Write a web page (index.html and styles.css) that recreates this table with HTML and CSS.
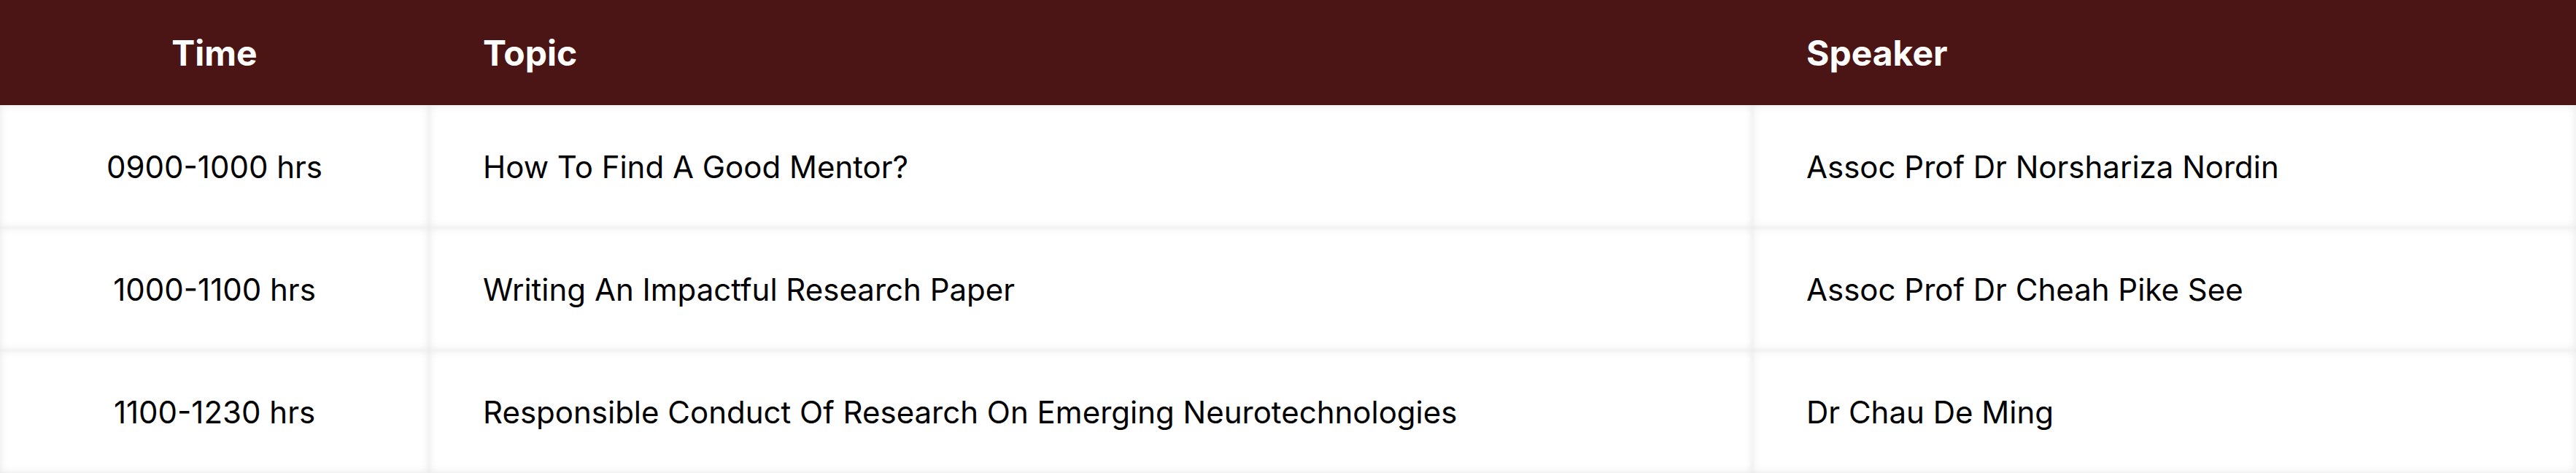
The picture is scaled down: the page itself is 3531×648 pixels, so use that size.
FILE: index.html
```html
<!DOCTYPE html>
<html>
<head>
<meta charset="utf-8">
<link rel="stylesheet" href="styles.css">
</head>
<body>
<div class="schedule">
  <div class="head center">Time</div>
  <div class="head">Topic</div>
  <div class="head">Speaker</div>

  <div class="cell center">0900-1000 hrs</div>
  <div class="cell">How To Find A Good Mentor?</div>
  <div class="cell">Assoc Prof Dr Norshariza Nordin</div>

  <div class="cell center">1000-1100 hrs</div>
  <div class="cell">Writing An Impactful Research Paper</div>
  <div class="cell">Assoc Prof Dr Cheah Pike See</div>

  <div class="cell center">1100-1230 hrs</div>
  <div class="cell">Responsible Conduct Of Research On Emerging Neurotechnologies</div>
  <div class="cell">Dr Chau De Ming</div>
</div>
</body>
</html>
```

FILE: styles.css
```css
html, body {
  margin: 0;
  padding: 0;
  background: #ffffff;
}
body {
  font-family: Inter, "Noto Sans", sans-serif;
  color: #000;
}
.schedule {
  display: grid;
  grid-template-columns: 588px 1814px 1fr;
  grid-template-rows: 144px 168px 168px 168px;
  width: 3531px;
}
.head {
  background: #4a1514;
  color: #fff;
  font-size: 48px;
  font-weight: 700;
  display: flex;
  align-items: center;
  padding-left: 74px;
}
.cell {
  background: #fff;
  box-shadow: inset 0 0 12px rgba(0, 0, 0, 0.1);
  font-size: 42px;
  font-weight: 400;
  display: flex;
  align-items: center;
  padding-left: 74px;
}
.center {
  justify-content: center;
  padding-left: 0;
}
```
